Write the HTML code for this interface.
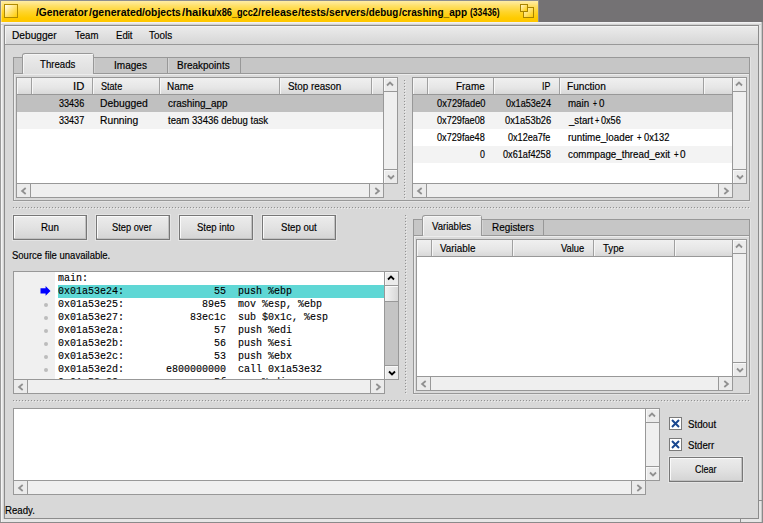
<!DOCTYPE html>
<html><head><meta charset="utf-8"><style>
html,body{margin:0;padding:0;width:763px;height:523px;overflow:hidden;background:#747274;}
body>div{position:absolute;box-sizing:content-box;}
.t{white-space:pre;transform-origin:0 0;-webkit-text-stroke:0.18px currentColor;}
.m{white-space:pre;font:10px/13px "Liberation Mono";-webkit-text-stroke:0.12px #000;}
</style></head><body>
<div style="left:0px;top:0px;width:539px;height:22px;background:#8e8e8e;"></div>
<div style="left:1px;top:1px;width:537px;height:21px;background:linear-gradient(#ffeda6 0px,#ffe066 5px,#ffd42a 11px,#ffcb00 17px,#ffc600 21px);"></div>
<div style="left:1px;top:1px;width:1px;height:21px;background:linear-gradient(#fff0b0,#ffdc50);"></div>
<div style="left:4px;top:4px;width:14px;height:14px;box-sizing:border-box;border:1px solid #b08a00;background:linear-gradient(135deg,#fffef5,#ffe066 55%,#ffcc00);"></div>
<div class="t" style="left:36.10px;top:5px;font:bold 11px/14px 'Liberation Sans';color:#000;transform:scaleX(0.9304);-webkit-text-stroke:0;">/Generator</div>
<div class="t" style="left:88.50px;top:5px;font:bold 11px/14px 'Liberation Sans';color:#000;transform:scaleX(0.9582);-webkit-text-stroke:0;">/generated</div>
<div class="t" style="left:141.50px;top:5px;font:bold 11px/14px 'Liberation Sans';color:#000;transform:scaleX(0.9333);-webkit-text-stroke:0;">/objects</div>
<div class="t" style="left:181.80px;top:5px;font:bold 11px/14px 'Liberation Sans';color:#000;transform:scaleX(1.0226);-webkit-text-stroke:0;">/haiku</div>
<div class="t" style="left:213.80px;top:5px;font:bold 11px/14px 'Liberation Sans';color:#000;transform:scaleX(0.8358);-webkit-text-stroke:0;">/x86_gcc2</div>
<div class="t" style="left:257.80px;top:5px;font:bold 11px/14px 'Liberation Sans';color:#000;transform:scaleX(0.9683);-webkit-text-stroke:0;">/release</div>
<div class="t" style="left:297.60px;top:5px;font:bold 11px/14px 'Liberation Sans';color:#000;transform:scaleX(0.9724);-webkit-text-stroke:0;">/tests</div>
<div class="t" style="left:326.00px;top:5px;font:bold 11px/14px 'Liberation Sans';color:#000;transform:scaleX(0.9429);-webkit-text-stroke:0;">/servers</div>
<div class="t" style="left:366.00px;top:5px;font:bold 11px/14px 'Liberation Sans';color:#000;transform:scaleX(0.8917);-webkit-text-stroke:0;">/debug</div>
<div class="t" style="left:398.50px;top:5px;font:bold 11px/14px 'Liberation Sans';color:#000;transform:scaleX(0.9122);-webkit-text-stroke:0;">/crashing_app</div>
<div class="t" style="left:469.70px;top:5px;font:bold 11px/14px 'Liberation Sans';color:#000;transform:scaleX(0.7789);-webkit-text-stroke:0;">(33436)</div>
<div style="left:523px;top:7px;width:11px;height:11px;box-sizing:border-box;border:1px solid #a88400;background:linear-gradient(135deg,#fff6cc,#ffcc00);"></div>
<div style="left:520px;top:4px;width:8px;height:8px;box-sizing:border-box;border:1px solid #a88400;background:linear-gradient(135deg,#fff6cc,#ffcc00);"></div>
<div style="left:0px;top:22px;width:763px;height:501px;background:#e6e6e6;"></div>
<div style="left:0px;top:22px;width:1px;height:501px;background:#9a9a9a;"></div>
<div style="left:762px;top:22px;width:1px;height:501px;background:#8a8a8a;"></div>
<div style="left:0px;top:522px;width:763px;height:1px;background:#8a8a8a;"></div>
<div style="left:1px;top:22px;width:761px;height:1px;background:#f2f2f4;"></div>
<div style="left:1px;top:22px;width:1px;height:500px;background:#f4f4f4;"></div>
<div style="left:1px;top:24px;width:761px;height:1px;background:#d0d0d0;"></div>
<div style="left:3px;top:24px;width:1px;height:495px;background:#d4d4d4;"></div>
<div style="left:761px;top:22px;width:1px;height:500px;background:#c8c8c8;"></div>
<div style="left:4px;top:25px;width:1px;height:494px;background:#8c8c8c;"></div>
<div style="left:758px;top:25px;width:1px;height:494px;background:#8c8c8c;"></div>
<div style="left:4px;top:25px;width:755px;height:1px;background:#8c8c8c;"></div>
<div style="left:4px;top:518px;width:755px;height:1px;background:#8c8c8c;"></div>
<div style="left:5px;top:26px;width:753px;height:492px;background:#d8d8d8;"></div>
<div style="left:740px;top:519px;width:1px;height:3px;background:#8c8c8c;"></div>
<div style="left:759px;top:500px;width:3px;height:1px;background:#8c8c8c;"></div>
<div style="left:5px;top:26px;width:753px;height:18px;background:linear-gradient(#ececec,#d6d6d6);"></div>
<div style="left:5px;top:26px;width:753px;height:1px;background:#f4f4f4;"></div>
<div style="left:5px;top:26px;width:1px;height:18px;background:#f4f4f4;"></div>
<div style="left:5px;top:44px;width:753px;height:1px;background:#989898;"></div>
<div class="t" style="left:12.42px;top:28px;font:11.5px/14px 'Liberation Sans';color:#000;transform:scaleX(0.8840);">Debugger</div>
<div class="t" style="left:75.00px;top:28px;font:11.5px/14px 'Liberation Sans';color:#000;transform:scaleX(0.8321);">Team</div>
<div class="t" style="left:115.77px;top:28px;font:11.5px/14px 'Liberation Sans';color:#000;transform:scaleX(0.8316);">Edit</div>
<div class="t" style="left:148.90px;top:28px;font:11.5px/14px 'Liberation Sans';color:#000;transform:scaleX(0.8593);">Tools</div>
<div style="left:13px;top:201px;width:738px;height:1px;background:#e4e4e4;"></div>
<div style="left:750px;top:57px;width:1px;height:145px;background:#e4e4e4;"></div>
<div style="left:13px;top:73px;width:737px;height:128px;background:#dadada;box-sizing:border-box;border:1px solid #989898;"></div>
<div style="left:14px;top:74px;width:735px;height:1px;background:#ececec;"></div>
<div style="left:14px;top:74px;width:1px;height:126px;background:#ececec;"></div>
<div style="left:13px;top:57px;width:737px;height:17px;background:#c6c6c6;box-sizing:border-box;border:1px solid #989898;"></div>
<div style="left:22px;top:53px;width:72px;height:21px;box-sizing:border-box;border:1px solid #989898;border-bottom:none;border-top-left-radius:3px;border-top-right-radius:3px;background:linear-gradient(#ececec,#dedede);"></div>
<div style="left:23px;top:55px;width:1px;height:19px;background:#f6f6f6;"></div>
<div style="left:25px;top:54px;width:68px;height:1px;background:#f6f6f6;"></div>
<div style="left:23px;top:73px;width:70px;height:1px;background:#dedede;"></div>
<div class="t" style="left:40.10px;top:57px;font:11.5px/14px 'Liberation Sans';color:#000;transform:scaleX(0.8381);">Threads</div>
<div style="left:167px;top:57px;width:1px;height:17px;background:#989898;"></div>
<div style="left:94px;top:58px;width:1px;height:15px;background:#d4d4d4;"></div>
<div class="t" style="left:113.83px;top:58px;font:11.5px/14px 'Liberation Sans';color:#000;transform:scaleX(0.8730);">Images</div>
<div style="left:240px;top:57px;width:1px;height:17px;background:#989898;"></div>
<div style="left:168px;top:58px;width:1px;height:15px;background:#d4d4d4;"></div>
<div class="t" style="left:177.13px;top:58px;font:11.5px/14px 'Liberation Sans';color:#000;transform:scaleX(0.8667);">Breakpoints</div>
<div style="left:16px;top:77px;width:368px;height:107px;background:#ffffff;"></div>
<div style="left:16px;top:77px;width:1px;height:121px;background:#989898;"></div>
<div style="left:16px;top:77px;width:382px;height:1px;background:#989898;"></div>
<div style="left:17px;top:78px;width:366px;height:16px;background:linear-gradient(#f0f0f0,#e6e6e6 60%,#d8d8d8);"></div>
<div style="left:17px;top:94px;width:366px;height:1px;background:#989898;"></div>
<div style="left:31px;top:78px;width:1px;height:16px;background:#a0a0a0;"></div>
<div style="left:32px;top:78px;width:1px;height:16px;background:#f6f6f6;"></div>
<div style="left:92px;top:78px;width:1px;height:16px;background:#a0a0a0;"></div>
<div style="left:93px;top:78px;width:1px;height:16px;background:#f6f6f6;"></div>
<div style="left:159px;top:78px;width:1px;height:16px;background:#a0a0a0;"></div>
<div style="left:160px;top:78px;width:1px;height:16px;background:#f6f6f6;"></div>
<div style="left:279px;top:78px;width:1px;height:16px;background:#a0a0a0;"></div>
<div style="left:280px;top:78px;width:1px;height:16px;background:#f6f6f6;"></div>
<div style="left:371px;top:78px;width:1px;height:16px;background:#a0a0a0;"></div>
<div style="left:372px;top:78px;width:1px;height:16px;background:#f6f6f6;"></div>
<div style="left:17px;top:78px;width:1px;height:16px;background:#f6f6f6;"></div>
<div style="left:17px;top:95px;width:366px;height:17px;background:#c0c0c0;"></div>
<div style="left:17px;top:112px;width:366px;height:17px;background:#f3f3f3;"></div>
<div style="left:383px;top:77px;width:13px;height:105px;border:1px solid #989898;"></div>
<div style="left:384px;top:78px;width:13px;height:13px;background:#ebebeb;"></div>
<div style="left:384px;top:78px;width:13px;height:1px;background:#f8f8f8;"></div>
<div style="left:384px;top:78px;width:1px;height:13px;background:#f8f8f8;"></div>
<div style="left:383px;top:91px;width:15px;height:1px;background:#989898;"></div>
<svg style="position:absolute;left:384.3px;top:78.0px" width="12" height="12" viewBox="-6 -6 12 12"><path d="M-3,1.5 L0,-1.5 L3,1.5" fill="none" stroke="#909090" stroke-width="1.8"/></svg>
<div style="left:384px;top:170px;width:13px;height:13px;background:#ebebeb;"></div>
<div style="left:384px;top:170px;width:13px;height:1px;background:#f8f8f8;"></div>
<div style="left:384px;top:170px;width:1px;height:13px;background:#f8f8f8;"></div>
<div style="left:383px;top:169px;width:15px;height:1px;background:#989898;"></div>
<svg style="position:absolute;left:384.5px;top:170.5px" width="12" height="12" viewBox="-6 -6 12 12"><path d="M-3,-1.5 L0,1.5 L3,-1.5" fill="none" stroke="#909090" stroke-width="1.8"/></svg>
<div style="left:384px;top:92px;width:13px;height:77px;background:#efefef;"></div>
<div style="left:16px;top:183px;width:366px;height:13px;border:1px solid #989898;"></div>
<div style="left:17px;top:184px;width:13px;height:13px;background:#ebebeb;"></div>
<div style="left:30px;top:183px;width:1px;height:15px;background:#989898;"></div>
<svg style="position:absolute;left:17.5px;top:184.5px" width="12" height="12" viewBox="-6 -6 12 12"><path d="M1.7,-3 L-1.9,0 L1.7,3" fill="none" stroke="#909090" stroke-width="1.8"/></svg>
<div style="left:370px;top:184px;width:13px;height:13px;background:#ebebeb;"></div>
<div style="left:369px;top:183px;width:1px;height:15px;background:#989898;"></div>
<svg style="position:absolute;left:370.5px;top:184.5px" width="12" height="12" viewBox="-6 -6 12 12"><path d="M-1.7,-3 L1.9,0 L-1.7,3" fill="none" stroke="#909090" stroke-width="1.8"/></svg>
<div style="left:31px;top:184px;width:338px;height:13px;background:#efefef;"></div>
<div class="t" style="left:73.02px;top:79px;font:11.5px/14px 'Liberation Sans';color:#000;transform:scaleX(0.9800);">ID</div>
<div class="t" style="left:100.70px;top:79px;font:11.5px/14px 'Liberation Sans';color:#000;transform:scaleX(0.7889);">State</div>
<div class="t" style="left:167.34px;top:79px;font:11.5px/14px 'Liberation Sans';color:#000;transform:scaleX(0.8633);">Name</div>
<div class="t" style="left:287.70px;top:79px;font:11.5px/14px 'Liberation Sans';color:#000;transform:scaleX(0.8565);">Stop reason</div>
<div class="t" style="left:59.00px;top:96px;font:11.5px/14px 'Liberation Sans';color:#000;transform:scaleX(0.7875);">33436</div>
<div class="t" style="left:99.80px;top:96px;font:11.5px/14px 'Liberation Sans';color:#000;transform:scaleX(0.8981);">Debugged</div>
<div class="t" style="left:168.20px;top:96px;font:11.5px/14px 'Liberation Sans';color:#000;transform:scaleX(0.8638);">crashing_app</div>
<div class="t" style="left:59.00px;top:113px;font:11.5px/14px 'Liberation Sans';color:#000;transform:scaleX(0.7875);">33437</div>
<div class="t" style="left:99.81px;top:113px;font:11.5px/14px 'Liberation Sans';color:#000;transform:scaleX(0.8929);">Running</div>
<div class="t" style="left:168.20px;top:113px;font:11.5px/14px 'Liberation Sans';color:#000;transform:scaleX(0.8333);">team 33436 debug task</div>
<svg style="position:absolute;left:404px;top:80px" width="2" height="120" shape-rendering="crispEdges"><defs><pattern id="dp1" width="2" height="3" patternUnits="userSpaceOnUse"><rect x="0" y="0" width="1" height="1" fill="#929292"/><rect x="1" y="1" width="1" height="1" fill="#ececec"/></pattern></defs><rect width="2" height="120" fill="url(#dp1)"/></svg>
<div style="left:412px;top:77px;width:321px;height:107px;background:#ffffff;"></div>
<div style="left:412px;top:77px;width:1px;height:121px;background:#989898;"></div>
<div style="left:412px;top:77px;width:335px;height:1px;background:#989898;"></div>
<div style="left:413px;top:78px;width:319px;height:16px;background:linear-gradient(#f0f0f0,#e6e6e6 60%,#d8d8d8);"></div>
<div style="left:413px;top:94px;width:319px;height:1px;background:#989898;"></div>
<div style="left:427px;top:78px;width:1px;height:16px;background:#a0a0a0;"></div>
<div style="left:428px;top:78px;width:1px;height:16px;background:#f6f6f6;"></div>
<div style="left:493px;top:78px;width:1px;height:16px;background:#a0a0a0;"></div>
<div style="left:494px;top:78px;width:1px;height:16px;background:#f6f6f6;"></div>
<div style="left:559px;top:78px;width:1px;height:16px;background:#a0a0a0;"></div>
<div style="left:560px;top:78px;width:1px;height:16px;background:#f6f6f6;"></div>
<div style="left:703px;top:78px;width:1px;height:16px;background:#a0a0a0;"></div>
<div style="left:704px;top:78px;width:1px;height:16px;background:#f6f6f6;"></div>
<div style="left:413px;top:78px;width:1px;height:16px;background:#f6f6f6;"></div>
<div style="left:413px;top:95px;width:319px;height:17px;background:#c0c0c0;"></div>
<div style="left:413px;top:112px;width:319px;height:17px;background:#f3f3f3;"></div>
<div style="left:413px;top:146px;width:319px;height:17px;background:#f3f3f3;"></div>
<div style="left:732px;top:77px;width:13px;height:105px;border:1px solid #989898;"></div>
<div style="left:733px;top:78px;width:13px;height:13px;background:#ebebeb;"></div>
<div style="left:733px;top:78px;width:13px;height:1px;background:#f8f8f8;"></div>
<div style="left:733px;top:78px;width:1px;height:13px;background:#f8f8f8;"></div>
<div style="left:732px;top:91px;width:15px;height:1px;background:#989898;"></div>
<svg style="position:absolute;left:733.3px;top:78.0px" width="12" height="12" viewBox="-6 -6 12 12"><path d="M-3,1.5 L0,-1.5 L3,1.5" fill="none" stroke="#909090" stroke-width="1.8"/></svg>
<div style="left:733px;top:170px;width:13px;height:13px;background:#ebebeb;"></div>
<div style="left:733px;top:170px;width:13px;height:1px;background:#f8f8f8;"></div>
<div style="left:733px;top:170px;width:1px;height:13px;background:#f8f8f8;"></div>
<div style="left:732px;top:169px;width:15px;height:1px;background:#989898;"></div>
<svg style="position:absolute;left:733.5px;top:170.5px" width="12" height="12" viewBox="-6 -6 12 12"><path d="M-3,-1.5 L0,1.5 L3,-1.5" fill="none" stroke="#909090" stroke-width="1.8"/></svg>
<div style="left:733px;top:92px;width:13px;height:77px;background:#efefef;"></div>
<div style="left:412px;top:183px;width:319px;height:13px;border:1px solid #989898;"></div>
<div style="left:413px;top:184px;width:13px;height:13px;background:#ebebeb;"></div>
<div style="left:426px;top:183px;width:1px;height:15px;background:#989898;"></div>
<svg style="position:absolute;left:413.5px;top:184.5px" width="12" height="12" viewBox="-6 -6 12 12"><path d="M1.7,-3 L-1.9,0 L1.7,3" fill="none" stroke="#909090" stroke-width="1.8"/></svg>
<div style="left:719px;top:184px;width:13px;height:13px;background:#ebebeb;"></div>
<div style="left:718px;top:183px;width:1px;height:15px;background:#989898;"></div>
<svg style="position:absolute;left:719.5px;top:184.5px" width="12" height="12" viewBox="-6 -6 12 12"><path d="M-1.7,-3 L1.9,0 L-1.7,3" fill="none" stroke="#909090" stroke-width="1.8"/></svg>
<div style="left:427px;top:184px;width:291px;height:13px;background:#efefef;"></div>
<div class="t" style="left:456.44px;top:79px;font:11.5px/14px 'Liberation Sans';color:#000;transform:scaleX(0.8625);">Frame</div>
<div class="t" style="left:541.63px;top:79px;font:11.5px/14px 'Liberation Sans';color:#000;transform:scaleX(0.7700);">IP</div>
<div class="t" style="left:567.22px;top:79px;font:11.5px/14px 'Liberation Sans';color:#000;transform:scaleX(0.8814);">Function</div>
<div class="t" style="left:436.50px;top:96px;font:11.5px/14px 'Liberation Sans';color:#000;transform:scaleX(0.8067);">0x729fade0</div>
<div class="t" style="left:506.30px;top:96px;font:11.5px/14px 'Liberation Sans';color:#000;transform:scaleX(0.7895);">0x1a53e24</div>
<div class="t" style="left:568.30px;top:96px;font:11.5px/14px 'Liberation Sans';color:#000;transform:scaleX(0.8440);">main</div>
<div class="t" style="left:592.70px;top:96px;font:11.5px/14px 'Liberation Sans';color:#000;transform:scaleX(0.5857);">+</div>
<div class="t" style="left:598.90px;top:96px;font:11.5px/14px 'Liberation Sans';color:#000;transform:scaleX(0.8500);">0</div>
<div class="t" style="left:437.20px;top:113px;font:11.5px/14px 'Liberation Sans';color:#000;transform:scaleX(0.7967);">0x729fae08</div>
<div class="t" style="left:505.00px;top:113px;font:11.5px/14px 'Liberation Sans';color:#000;transform:scaleX(0.8123);">0x1a53b26</div>
<div class="t" style="left:569.14px;top:113px;font:11.5px/14px 'Liberation Sans';color:#000;transform:scaleX(0.8400);">_start</div>
<div class="t" style="left:594.60px;top:113px;font:11.5px/14px 'Liberation Sans';color:#000;transform:scaleX(0.6286);">+</div>
<div class="t" style="left:601.20px;top:113px;font:11.5px/14px 'Liberation Sans';color:#000;transform:scaleX(0.7920);">0x56</div>
<div class="t" style="left:437.20px;top:130px;font:11.5px/14px 'Liberation Sans';color:#000;transform:scaleX(0.7950);">0x729fae48</div>
<div class="t" style="left:508.40px;top:130px;font:11.5px/14px 'Liberation Sans';color:#000;transform:scaleX(0.7889);">0x12ea7fe</div>
<div class="t" style="left:568.30px;top:130px;font:11.5px/14px 'Liberation Sans';color:#000;transform:scaleX(0.8519);">runtime_loader</div>
<div class="t" style="left:637.00px;top:130px;font:11.5px/14px 'Liberation Sans';color:#000;transform:scaleX(0.6714);">+</div>
<div class="t" style="left:643.90px;top:130px;font:11.5px/14px 'Liberation Sans';color:#000;transform:scaleX(0.8097);">0x132</div>
<div class="t" style="left:480.30px;top:147px;font:11.5px/14px 'Liberation Sans';color:#000;transform:scaleX(0.7667);">0</div>
<div class="t" style="left:503.30px;top:147px;font:11.5px/14px 'Liberation Sans';color:#000;transform:scaleX(0.7950);">0x61af4258</div>
<div class="t" style="left:568.30px;top:147px;font:11.5px/14px 'Liberation Sans';color:#000;transform:scaleX(0.8488);">commpage_thread_exit</div>
<div class="t" style="left:673.80px;top:147px;font:11.5px/14px 'Liberation Sans';color:#000;transform:scaleX(0.6857);">+</div>
<div class="t" style="left:680.00px;top:147px;font:11.5px/14px 'Liberation Sans';color:#000;transform:scaleX(0.8667);">0</div>
<svg style="position:absolute;left:13px;top:207px" width="738" height="2" shape-rendering="crispEdges"><defs><pattern id="dp2" width="3" height="2" patternUnits="userSpaceOnUse"><rect x="0" y="0" width="1" height="1" fill="#929292"/><rect x="1" y="1" width="1" height="1" fill="#ececec"/></pattern></defs><rect width="738" height="2" fill="url(#dp2)"/></svg>
<div style="left:12px;top:214px;width:76px;height:27px;background:#e4e4e4;"></div>
<div style="left:13px;top:215px;width:74px;height:25px;box-sizing:border-box;border:1px solid #777;background:linear-gradient(#ececec,#e2e2e2 50%,#d4d4d4);"></div>
<div style="left:14px;top:216px;width:72px;height:1px;background:#fafafa;"></div>
<div style="left:14px;top:216px;width:1px;height:23px;background:#fafafa;"></div>
<div style="left:14px;top:238px;width:72px;height:1px;background:#c0c0c0;"></div>
<div style="left:85px;top:216px;width:1px;height:23px;background:#c0c0c0;"></div>
<div class="t" style="left:40.75px;top:220px;font:11.5px/14px 'Liberation Sans';color:#000;transform:scaleX(0.8500);">Run</div>
<div style="left:95px;top:214px;width:76px;height:27px;background:#e4e4e4;"></div>
<div style="left:96px;top:215px;width:74px;height:25px;box-sizing:border-box;border:1px solid #777;background:linear-gradient(#ececec,#e2e2e2 50%,#d4d4d4);"></div>
<div style="left:97px;top:216px;width:72px;height:1px;background:#fafafa;"></div>
<div style="left:97px;top:216px;width:1px;height:23px;background:#fafafa;"></div>
<div style="left:97px;top:238px;width:72px;height:1px;background:#c0c0c0;"></div>
<div style="left:168px;top:216px;width:1px;height:23px;background:#c0c0c0;"></div>
<div class="t" style="left:112.30px;top:220px;font:11.5px/14px 'Liberation Sans';color:#000;transform:scaleX(0.8080);">Step over</div>
<div style="left:178px;top:214px;width:76px;height:27px;background:#e4e4e4;"></div>
<div style="left:179px;top:215px;width:74px;height:25px;box-sizing:border-box;border:1px solid #777;background:linear-gradient(#ececec,#e2e2e2 50%,#d4d4d4);"></div>
<div style="left:180px;top:216px;width:72px;height:1px;background:#fafafa;"></div>
<div style="left:180px;top:216px;width:1px;height:23px;background:#fafafa;"></div>
<div style="left:180px;top:238px;width:72px;height:1px;background:#c0c0c0;"></div>
<div style="left:251px;top:216px;width:1px;height:23px;background:#c0c0c0;"></div>
<div class="t" style="left:197.00px;top:220px;font:11.5px/14px 'Liberation Sans';color:#000;transform:scaleX(0.8289);">Step into</div>
<div style="left:261px;top:214px;width:76px;height:27px;background:#e4e4e4;"></div>
<div style="left:262px;top:215px;width:74px;height:25px;box-sizing:border-box;border:1px solid #777;background:linear-gradient(#ececec,#e2e2e2 50%,#d4d4d4);"></div>
<div style="left:263px;top:216px;width:72px;height:1px;background:#fafafa;"></div>
<div style="left:263px;top:216px;width:1px;height:23px;background:#fafafa;"></div>
<div style="left:263px;top:238px;width:72px;height:1px;background:#c0c0c0;"></div>
<div style="left:334px;top:216px;width:1px;height:23px;background:#c0c0c0;"></div>
<div class="t" style="left:281.00px;top:220px;font:11.5px/14px 'Liberation Sans';color:#000;transform:scaleX(0.8349);">Step out</div>
<div class="t" style="left:12.10px;top:248px;font:11.5px/14px 'Liberation Sans';color:#000;transform:scaleX(0.8263);">Source file unavailable.</div>
<div style="left:13px;top:271px;width:372px;height:109px;background:#ffffff;"></div>
<div style="left:13px;top:271px;width:1px;height:123px;background:#989898;"></div>
<div style="left:13px;top:271px;width:386px;height:1px;background:#989898;"></div>
<div style="left:14px;top:272px;width:41px;height:107px;background:#f0f0f0;"></div>
<div style="left:58px;top:285px;width:326px;height:13px;background:#5fd7d5;"></div>
<div style="left:58px;top:272px;width:326px;height:107px;overflow:hidden"><div class="m" style="position:absolute;left:0;top:0">main:
0x01a53e24:               55  push %ebp
0x01a53e25:             89e5  mov %esp, %ebp
0x01a53e27:           83ec1c  sub $0x1c, %esp
0x01a53e2a:               57  push %edi
0x01a53e2b:               56  push %esi
0x01a53e2c:               53  push %ebx
0x01a53e2d:       e800000000  call 0x1a53e32
0x01a53e32:               5f  pop %edi</div></div>
<svg style="position:absolute;left:40px;top:286px" width="11" height="11" viewBox="0 0 11 11"><path d="M0.5,2.2 H5.6 V0 L10.5,4.9 L5.6,9.8 V7.5 H0.5 Z" fill="#0000ff"/></svg>
<div style="left:44px;top:302.5px;width:4px;height:4px;border-radius:50%;background:#bcbcbc"></div>
<div style="left:44px;top:315.5px;width:4px;height:4px;border-radius:50%;background:#bcbcbc"></div>
<div style="left:44px;top:328.5px;width:4px;height:4px;border-radius:50%;background:#bcbcbc"></div>
<div style="left:44px;top:341.5px;width:4px;height:4px;border-radius:50%;background:#bcbcbc"></div>
<div style="left:44px;top:354.5px;width:4px;height:4px;border-radius:50%;background:#bcbcbc"></div>
<div style="left:44px;top:367.5px;width:4px;height:4px;border-radius:50%;background:#bcbcbc"></div>
<div style="left:44px;top:380.5px;width:4px;height:4px;border-radius:50%;background:#bcbcbc"></div>
<div style="left:384px;top:271px;width:13px;height:107px;border:1px solid #989898;"></div>
<div style="left:385px;top:272px;width:13px;height:13px;background:#ebebeb;"></div>
<div style="left:385px;top:272px;width:13px;height:1px;background:#f8f8f8;"></div>
<div style="left:385px;top:272px;width:1px;height:13px;background:#f8f8f8;"></div>
<div style="left:384px;top:285px;width:15px;height:1px;background:#989898;"></div>
<svg style="position:absolute;left:385.3px;top:272.0px" width="12" height="12" viewBox="-6 -6 12 12"><path d="M-3,1.5 L0,-1.5 L3,1.5" fill="none" stroke="#000" stroke-width="1.8"/></svg>
<div style="left:385px;top:366px;width:13px;height:13px;background:#ebebeb;"></div>
<div style="left:385px;top:366px;width:13px;height:1px;background:#f8f8f8;"></div>
<div style="left:385px;top:366px;width:1px;height:13px;background:#f8f8f8;"></div>
<div style="left:384px;top:365px;width:15px;height:1px;background:#989898;"></div>
<svg style="position:absolute;left:385.5px;top:366.5px" width="12" height="12" viewBox="-6 -6 12 12"><path d="M-3,-1.5 L0,1.5 L3,-1.5" fill="none" stroke="#000" stroke-width="1.8"/></svg>
<div style="left:385px;top:286px;width:13px;height:79px;background:#c4c4c4;"></div>
<div style="left:385px;top:286px;width:13px;height:15px;background:linear-gradient(90deg,#f4f4f4,#e6e6e6 50%,#d8d8d8);"></div>
<div style="left:385px;top:286px;width:13px;height:1px;background:#fafafa;"></div>
<div style="left:384px;top:301px;width:15px;height:1px;background:#989898;"></div>
<div style="left:13px;top:379px;width:370px;height:13px;border:1px solid #989898;"></div>
<div style="left:14px;top:380px;width:13px;height:13px;background:#ebebeb;"></div>
<div style="left:27px;top:379px;width:1px;height:15px;background:#989898;"></div>
<svg style="position:absolute;left:14.5px;top:380.5px" width="12" height="12" viewBox="-6 -6 12 12"><path d="M1.7,-3 L-1.9,0 L1.7,3" fill="none" stroke="#909090" stroke-width="1.8"/></svg>
<div style="left:371px;top:380px;width:13px;height:13px;background:#ebebeb;"></div>
<div style="left:370px;top:379px;width:1px;height:15px;background:#989898;"></div>
<svg style="position:absolute;left:371.5px;top:380.5px" width="12" height="12" viewBox="-6 -6 12 12"><path d="M-1.7,-3 L1.9,0 L-1.7,3" fill="none" stroke="#909090" stroke-width="1.8"/></svg>
<div style="left:28px;top:380px;width:342px;height:13px;background:#efefef;"></div>
<svg style="position:absolute;left:405px;top:215px" width="2" height="180" shape-rendering="crispEdges"><defs><pattern id="dp3" width="2" height="3" patternUnits="userSpaceOnUse"><rect x="0" y="0" width="1" height="1" fill="#929292"/><rect x="1" y="1" width="1" height="1" fill="#ececec"/></pattern></defs><rect width="2" height="180" fill="url(#dp3)"/></svg>
<div style="left:413px;top:394px;width:338px;height:1px;background:#e4e4e4;"></div>
<div style="left:750px;top:219px;width:1px;height:176px;background:#e4e4e4;"></div>
<div style="left:413px;top:235px;width:337px;height:159px;background:#dadada;box-sizing:border-box;border:1px solid #989898;"></div>
<div style="left:414px;top:236px;width:335px;height:1px;background:#ececec;"></div>
<div style="left:414px;top:236px;width:1px;height:157px;background:#ececec;"></div>
<div style="left:413px;top:219px;width:337px;height:17px;background:#c6c6c6;box-sizing:border-box;border:1px solid #989898;"></div>
<div style="left:422px;top:215px;width:60px;height:21px;box-sizing:border-box;border:1px solid #989898;border-bottom:none;border-top-left-radius:3px;border-top-right-radius:3px;background:linear-gradient(#ececec,#dedede);"></div>
<div style="left:423px;top:217px;width:1px;height:19px;background:#f6f6f6;"></div>
<div style="left:425px;top:216px;width:56px;height:1px;background:#f6f6f6;"></div>
<div style="left:423px;top:235px;width:58px;height:1px;background:#dedede;"></div>
<div class="t" style="left:432.20px;top:219px;font:11.5px/14px 'Liberation Sans';color:#000;transform:scaleX(0.8298);">Variables</div>
<div style="left:543px;top:219px;width:1px;height:17px;background:#989898;"></div>
<div style="left:482px;top:220px;width:1px;height:15px;background:#d4d4d4;"></div>
<div class="t" style="left:492.14px;top:220px;font:11.5px/14px 'Liberation Sans';color:#000;transform:scaleX(0.8617);">Registers</div>
<div style="left:416px;top:239px;width:317px;height:138px;background:#ffffff;"></div>
<div style="left:416px;top:239px;width:1px;height:152px;background:#989898;"></div>
<div style="left:416px;top:239px;width:331px;height:1px;background:#989898;"></div>
<div style="left:417px;top:240px;width:315px;height:16px;background:linear-gradient(#f0f0f0,#e6e6e6 60%,#d8d8d8);"></div>
<div style="left:417px;top:256px;width:315px;height:1px;background:#989898;"></div>
<div style="left:431px;top:240px;width:1px;height:16px;background:#a0a0a0;"></div>
<div style="left:432px;top:240px;width:1px;height:16px;background:#f6f6f6;"></div>
<div style="left:512px;top:240px;width:1px;height:16px;background:#a0a0a0;"></div>
<div style="left:513px;top:240px;width:1px;height:16px;background:#f6f6f6;"></div>
<div style="left:593px;top:240px;width:1px;height:16px;background:#a0a0a0;"></div>
<div style="left:594px;top:240px;width:1px;height:16px;background:#f6f6f6;"></div>
<div style="left:674px;top:240px;width:1px;height:16px;background:#a0a0a0;"></div>
<div style="left:675px;top:240px;width:1px;height:16px;background:#f6f6f6;"></div>
<div style="left:417px;top:240px;width:1px;height:16px;background:#f6f6f6;"></div>
<div style="left:732px;top:239px;width:13px;height:136px;border:1px solid #989898;"></div>
<div style="left:733px;top:240px;width:13px;height:13px;background:#ebebeb;"></div>
<div style="left:733px;top:240px;width:13px;height:1px;background:#f8f8f8;"></div>
<div style="left:733px;top:240px;width:1px;height:13px;background:#f8f8f8;"></div>
<div style="left:732px;top:253px;width:15px;height:1px;background:#989898;"></div>
<svg style="position:absolute;left:733.3px;top:240.0px" width="12" height="12" viewBox="-6 -6 12 12"><path d="M-3,1.5 L0,-1.5 L3,1.5" fill="none" stroke="#909090" stroke-width="1.8"/></svg>
<div style="left:733px;top:363px;width:13px;height:13px;background:#ebebeb;"></div>
<div style="left:733px;top:363px;width:13px;height:1px;background:#f8f8f8;"></div>
<div style="left:733px;top:363px;width:1px;height:13px;background:#f8f8f8;"></div>
<div style="left:732px;top:362px;width:15px;height:1px;background:#989898;"></div>
<svg style="position:absolute;left:733.5px;top:363.5px" width="12" height="12" viewBox="-6 -6 12 12"><path d="M-3,-1.5 L0,1.5 L3,-1.5" fill="none" stroke="#909090" stroke-width="1.8"/></svg>
<div style="left:733px;top:254px;width:13px;height:108px;background:#efefef;"></div>
<div style="left:416px;top:376px;width:315px;height:13px;border:1px solid #989898;"></div>
<div style="left:417px;top:377px;width:13px;height:13px;background:#ebebeb;"></div>
<div style="left:430px;top:376px;width:1px;height:15px;background:#989898;"></div>
<svg style="position:absolute;left:417.5px;top:377.5px" width="12" height="12" viewBox="-6 -6 12 12"><path d="M1.7,-3 L-1.9,0 L1.7,3" fill="none" stroke="#909090" stroke-width="1.8"/></svg>
<div style="left:719px;top:377px;width:13px;height:13px;background:#ebebeb;"></div>
<div style="left:718px;top:376px;width:1px;height:15px;background:#989898;"></div>
<svg style="position:absolute;left:719.5px;top:377.5px" width="12" height="12" viewBox="-6 -6 12 12"><path d="M-1.7,-3 L1.9,0 L-1.7,3" fill="none" stroke="#909090" stroke-width="1.8"/></svg>
<div style="left:431px;top:377px;width:287px;height:13px;background:#efefef;"></div>
<div class="t" style="left:440.00px;top:241px;font:11.5px/14px 'Liberation Sans';color:#000;transform:scaleX(0.8561);">Variable</div>
<div class="t" style="left:561.10px;top:241px;font:11.5px/14px 'Liberation Sans';color:#000;transform:scaleX(0.8138);">Value</div>
<div class="t" style="left:602.50px;top:241px;font:11.5px/14px 'Liberation Sans';color:#000;transform:scaleX(0.8360);">Type</div>
<svg style="position:absolute;left:13px;top:400px" width="738" height="2" shape-rendering="crispEdges"><defs><pattern id="dp4" width="3" height="2" patternUnits="userSpaceOnUse"><rect x="0" y="0" width="1" height="1" fill="#929292"/><rect x="1" y="1" width="1" height="1" fill="#ececec"/></pattern></defs><rect width="738" height="2" fill="url(#dp4)"/></svg>
<div style="left:13px;top:408px;width:633px;height:73px;background:#ffffff;"></div>
<div style="left:13px;top:408px;width:1px;height:87px;background:#989898;"></div>
<div style="left:13px;top:408px;width:647px;height:1px;background:#989898;"></div>
<div style="left:645px;top:408px;width:13px;height:71px;border:1px solid #989898;"></div>
<div style="left:646px;top:409px;width:13px;height:13px;background:#ebebeb;"></div>
<div style="left:646px;top:409px;width:13px;height:1px;background:#f8f8f8;"></div>
<div style="left:646px;top:409px;width:1px;height:13px;background:#f8f8f8;"></div>
<div style="left:645px;top:422px;width:15px;height:1px;background:#989898;"></div>
<svg style="position:absolute;left:646.3px;top:409.0px" width="12" height="12" viewBox="-6 -6 12 12"><path d="M-3,1.5 L0,-1.5 L3,1.5" fill="none" stroke="#909090" stroke-width="1.8"/></svg>
<div style="left:646px;top:467px;width:13px;height:13px;background:#ebebeb;"></div>
<div style="left:646px;top:467px;width:13px;height:1px;background:#f8f8f8;"></div>
<div style="left:646px;top:467px;width:1px;height:13px;background:#f8f8f8;"></div>
<div style="left:645px;top:466px;width:15px;height:1px;background:#989898;"></div>
<svg style="position:absolute;left:646.5px;top:467.5px" width="12" height="12" viewBox="-6 -6 12 12"><path d="M-3,-1.5 L0,1.5 L3,-1.5" fill="none" stroke="#909090" stroke-width="1.8"/></svg>
<div style="left:646px;top:423px;width:13px;height:43px;background:#efefef;"></div>
<div style="left:13px;top:480px;width:631px;height:13px;border:1px solid #989898;"></div>
<div style="left:14px;top:481px;width:13px;height:13px;background:#ebebeb;"></div>
<div style="left:27px;top:480px;width:1px;height:15px;background:#989898;"></div>
<svg style="position:absolute;left:14.5px;top:481.5px" width="12" height="12" viewBox="-6 -6 12 12"><path d="M1.7,-3 L-1.9,0 L1.7,3" fill="none" stroke="#909090" stroke-width="1.8"/></svg>
<div style="left:632px;top:481px;width:13px;height:13px;background:#ebebeb;"></div>
<div style="left:631px;top:480px;width:1px;height:15px;background:#989898;"></div>
<svg style="position:absolute;left:632.5px;top:481.5px" width="12" height="12" viewBox="-6 -6 12 12"><path d="M-1.7,-3 L1.9,0 L-1.7,3" fill="none" stroke="#909090" stroke-width="1.8"/></svg>
<div style="left:28px;top:481px;width:603px;height:13px;background:#efefef;"></div>
<div style="left:669px;top:417px;width:13px;height:13px;background:#ffffff;box-sizing:border-box;border:1px solid #7a7a7a;"></div>
<svg style="position:absolute;left:669px;top:417px" width="13" height="13" viewBox="0 0 13 13"><path d="M3,3 L10,10 M10,3 L3,10" stroke="#1a4890" stroke-width="2" fill="none"/></svg>
<div class="t" style="left:688.20px;top:417px;font:11.5px/14px 'Liberation Sans';color:#000;transform:scaleX(0.8471);">Stdout</div>
<div style="left:669px;top:438px;width:13px;height:13px;background:#ffffff;box-sizing:border-box;border:1px solid #7a7a7a;"></div>
<svg style="position:absolute;left:669px;top:438px" width="13" height="13" viewBox="0 0 13 13"><path d="M3,3 L10,10 M10,3 L3,10" stroke="#1a4890" stroke-width="2" fill="none"/></svg>
<div class="t" style="left:688.00px;top:438px;font:11.5px/14px 'Liberation Sans';color:#000;transform:scaleX(0.8375);">Stderr</div>
<div style="left:668px;top:456px;width:76px;height:27px;background:#e4e4e4;"></div>
<div style="left:669px;top:457px;width:74px;height:25px;box-sizing:border-box;border:1px solid #777;background:linear-gradient(#ececec,#e2e2e2 50%,#d4d4d4);"></div>
<div style="left:670px;top:458px;width:72px;height:1px;background:#fafafa;"></div>
<div style="left:670px;top:458px;width:1px;height:23px;background:#fafafa;"></div>
<div style="left:670px;top:480px;width:72px;height:1px;background:#c0c0c0;"></div>
<div style="left:741px;top:458px;width:1px;height:23px;background:#c0c0c0;"></div>
<div class="t" style="left:694.90px;top:462px;font:11.5px/14px 'Liberation Sans';color:#000;transform:scaleX(0.7821);">Clear</div>
<div class="t" style="left:5.06px;top:503px;font:11.5px/14px 'Liberation Sans';color:#000;transform:scaleX(0.8382);">Ready.</div>
</body></html>
